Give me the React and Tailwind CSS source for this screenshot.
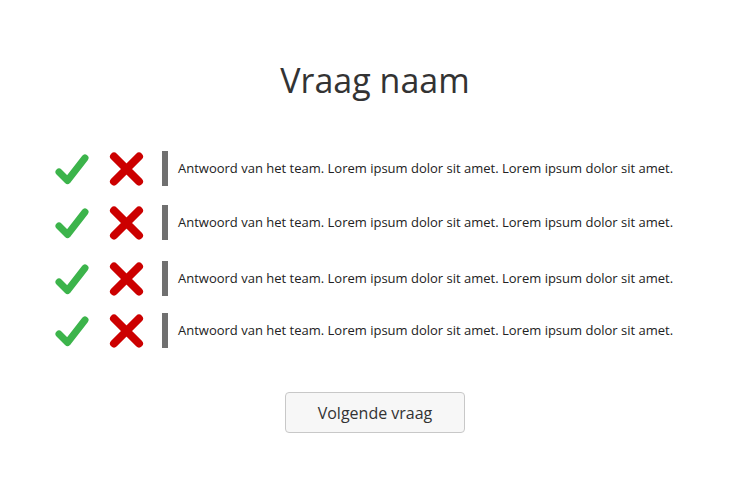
const answers = [
    { text: 'Antwoord van het team. Lorem ipsum dolor sit amet. Lorem ipsum dolor sit amet.', space: '' },
    { text: 'Antwoord van het team. Lorem ipsum dolor sit amet. Lorem ipsum dolor sit amet.', space: 'mt-[19px]' },
    { text: 'Antwoord van het team. Lorem ipsum dolor sit amet. Lorem ipsum dolor sit amet.', space: 'mt-[21px]' },
    { text: 'Antwoord van het team. Lorem ipsum dolor sit amet. Lorem ipsum dolor sit amet.', space: 'mt-[17px]' },
];

function CheckIcon() {
    return (
        <svg width="34" height="32" viewBox="0 0 34 32" className="shrink-0">
            <path d="M4 19 L12.5 27.5 L30 5" fill="none" stroke="#3cb44b" strokeWidth="7" strokeLinecap="round" strokeLinejoin="round" />
        </svg>
    );
}

function CrossIcon() {
    return (
        <svg width="35" height="36" viewBox="0 0 35 36" className="shrink-0">
            <path d="M5 5.5 L30 30.5 M30 5.5 L5 30.5" fill="none" stroke="#cc0000" strokeWidth="8" strokeLinecap="round" />
        </svg>
    );
}

export default function App() {
    return (
        <div className="w-[750px] h-[500px] bg-white font-['Open_Sans',sans-serif] text-[#333]">
            <h1 className="pt-[57px] text-center text-[34px] leading-[46px]">Vraag naam</h1>

            <div className="mt-[48px] pl-[55px] flex flex-col">
                {answers.map((a, i) => (
                    <div key={i} className={`flex items-center h-[35px] ${a.space}`}>
                        <CheckIcon />
                        <div className="ml-[20px] shrink-0">
                            <CrossIcon />
                        </div>
                        <div className="ml-[18px] w-[6px] h-[35px] shrink-0 bg-[#707070]" />
                        <p className="ml-[10px] text-[13px] text-[#222] whitespace-nowrap">{a.text}</p>
                    </div>
                ))}
            </div>

            <div className="mt-[44px] flex justify-center">
                <button className="w-[180px] h-[41px] rounded-[4px] border border-[#c8c8c8] bg-[#f7f7f7] text-[16px] text-[#333]">
                    Volgende vraag
                </button>
            </div>
        </div>
    );
}
